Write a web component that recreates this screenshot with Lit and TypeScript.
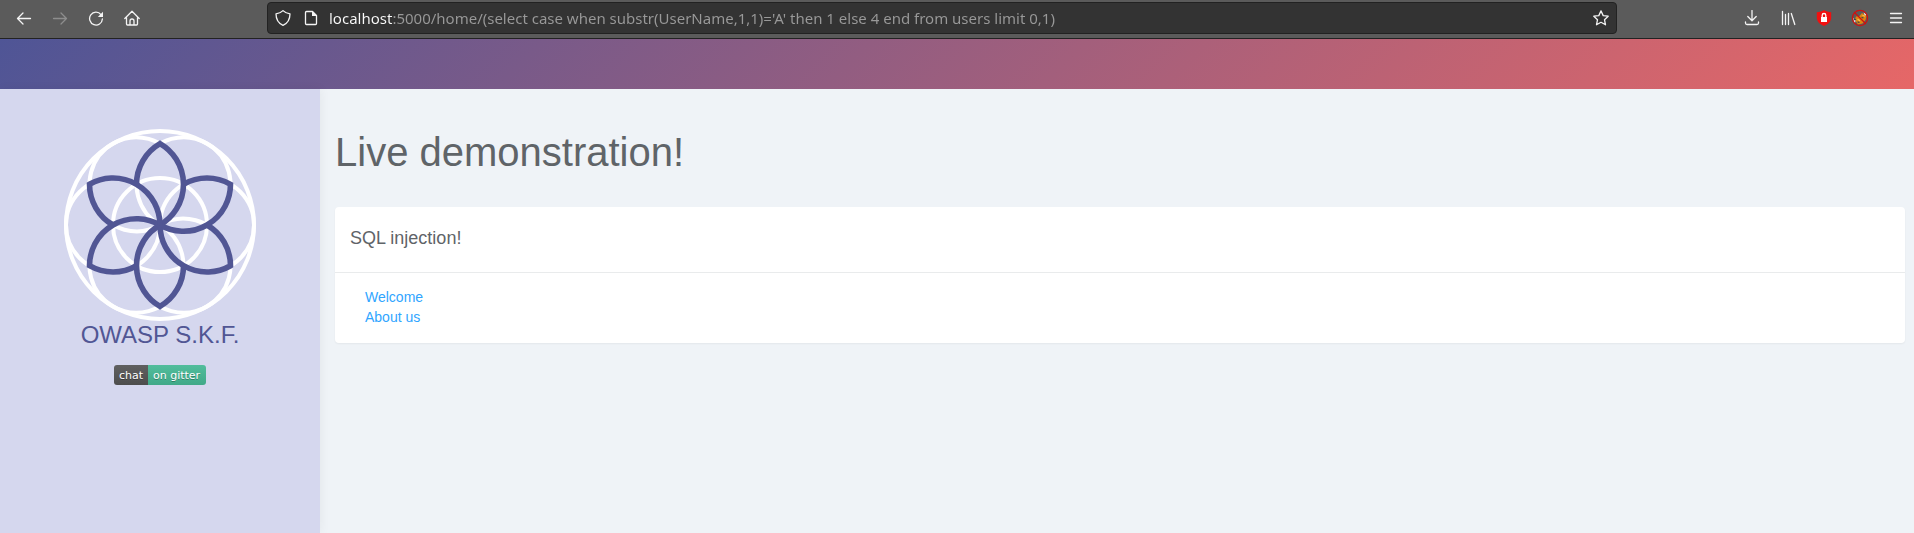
import { LitElement, html, css, svg } from "lit";
import { customElement, property } from "lit/decorators.js";

@customElement("flower-logo")
class FlowerLogo extends LitElement {
  static styles = css`
    :host { display: block; }
    .art { display: block; width: 192px; height: 192px; }
    .ring { fill: none; stroke: #fff; stroke-width: 4; }
    .petal { fill: none; stroke: #515694; stroke-width: 5.6; stroke-miterlimit: 8; }
  `;

  render() {
    const turns = [0, 60, 120, 180, 240, 300];
    return html`
      <svg class="art" viewBox="-96 -96 192 192" aria-hidden="true">
        <circle class="ring" r="94" />
        <circle class="ring" r="47" />
        ${turns.map((a) => svg`<circle class="ring" cx="47" r="47" transform="rotate(${a})" />`)}
        ${turns.map((a) => svg`<path class="petal" transform="rotate(${a})"
          d="M0 0A47 47 0 0 0 0-81.4A47 47 0 0 0-23.5-40.7" />`)}
      </svg>`;
  }
}

@customElement("browser-bar")
class BrowserBar extends LitElement {
  @property() address = "";

  static styles = css`
    :host { display: block; }
    .bar {
      display: grid;
      grid-template-columns: 267px minmax(0, 1350px) minmax(180px, 1fr);
      align-items: center;
      height: 36px;
      padding-bottom: 2px;
      background: #5b5b5b;
      border-bottom: 1px solid #222;
    }
    .group { display: flex; align-items: center; gap: 12px; }
    .nav { padding-left: 12px; }
    .tools { justify-content: flex-end; padding-right: 6px; }
    .icon {
      display: grid;
      place-items: center;
      width: 24px;
      height: 24px;
      padding: 0;
      border: 0;
      background: none;
      color: #f4f4f4;
    }
    .icon:disabled { color: #8d8d8d; }
    svg { display: block; width: 16px; height: 16px; fill: none; stroke: currentColor; stroke-width: 1.3; stroke-linecap: round; stroke-linejoin: round; }
    .solid { fill: currentColor; stroke: none; }
    .field {
      display: flex;
      align-items: center;
      gap: 4px;
      box-sizing: border-box;
      height: 32px;
      padding: 0 3px;
      border: 1px solid #222;
      border-radius: 4px;
      background: #333;
    }
    .address {
      flex: 1;
      min-width: 0;
      margin-left: 2px;
      padding: 0;
      border: 0;
      outline: 0;
      font: 15px/24px "Noto Sans", "Open Sans", sans-serif;
      color: transparent;
      background: linear-gradient(90deg, #fbfbfb 64px, #999 64px);
      background-clip: text;
      -webkit-background-clip: text;
    }
    .badge { width: 16px; height: 16px; overflow: visible; }
  `;

  render() {
    return html`
      <div class="bar">
        <nav class="group nav">
          <button class="icon" aria-label="Back"><svg viewBox="0 0 16 16"><path d="M14.5 8.500H1.500M7 3 1.500 8.500 7 14" /></svg></button>
          <button class="icon" aria-label="Forward" disabled><svg viewBox="0 0 16 16"><path d="M1.500 8.500H14.500M9 3 14.500 8.500 9 14" /></svg></button>
          <button class="icon" aria-label="Reload"><svg viewBox="0 0 16 16"><path d="M13 4.600A6.400 6.400 0 1 0 14.400 9" /><path class="solid" d="M15 1.800v5.200H9.800z" /></svg></button>
          <button class="icon" aria-label="Home"><svg viewBox="0 0 16 16"><path d="M.8 8.500 8 1.300l7.200 7.200M2.500 7.500V14a1 1 0 0 0 1 1h9a1 1 0 0 0 1-1V7.500M6 14.500V11a2 2 0 0 1 4 0v3.500" /></svg></button>
        </nav>
        <div class="field">
          <button class="icon" aria-label="Tracking protection"><svg viewBox="0 0 16 16"><path d="M8 .6C6.200 2.400 3.800 3.400 1 3.800 1 9 3.200 13.300 8 15.300c4.800-2 7-6.300 7-11.500C12.200 3.400 9.800 2.400 8 .6z" /></svg></button>
          <button class="icon" aria-label="Site information"><svg viewBox="0 0 16 16"><path d="M3.500 1.500H9.500L13.500 5.500v8a1 1 0 0 1-1 1h-9a1 1 0 0 1-1-1v-11a1 1 0 0 1 1-1z" /><path class="solid" d="M9 1v5h5z" /></svg></button>
          <input class="address" type="text" aria-label="Address" spellcheck="false" .value=${this.address} />
          <button class="icon" aria-label="Bookmark"><svg viewBox="0 0 16 16"><path d="m8 .9 2.200 4.700 5 .6-3.700 3.500 1 5.100L8 12.300l-4.500 2.500 1-5.100L.8 6.200l5-.6z" /></svg></button>
        </div>
        <div class="group tools">
          <button class="icon" aria-label="Downloads"><svg viewBox="0 0 16 16"><path d="M8 .5V10.500M3.800 6.500 8 10.700l4.200-4.200M1.500 12v1a1.500 1.500 0 0 0 1.500 1.500h10a1.500 1.500 0 0 0 1.500-1.500V12" /></svg></button>
          <button class="icon" aria-label="Library"><svg viewBox="0 0 16 16"><path d="M2.500 1.500v13M5.500 4.500v10M8.500 3.500v11M11.300 3.500 14.800 14.500" /></svg></button>
          <button class="icon" aria-label="Blocker"><svg class="badge" viewBox="0 0 16 16"><path fill="#f01010" stroke="none" d="M8 0C6 1.500 3.500 2 .8 2.200v5.300c0 4 3 7 7.200 8.500 4.200-1.500 7.200-4.500 7.200-8.500V2.200C12.500 2 10 1.500 8 0z" /><path fill="#fff" stroke="none" d="M5 7h6v5H5z" /><path stroke="#fff" d="M6.200 7V5.300a1.800 1.800 0 0 1 3.600 0V7" /></svg></button>
          <button class="icon" aria-label="Proxy"><svg class="badge" viewBox="0 0 16 16"><path fill="#eee" stroke="none" d="m.8 8 3 2-1 3.500zM11.500 2.500l3 2-1.500 2z" /><path fill="#dd8512" stroke="none" d="M4 6.500 7.500 6l2.500-3 2 1.500 2.500 1.500-1 4-3 3.500-4.500 1-2-3L3 9z" /><path stroke="#3d4650" d="M2.500 9.500h1M6 12l1 .3M10 7.500l1 .3" /><path stroke="#ffbf52" d="m6 9.500 1.500 1M11 5.500l1.500.5" /><path stroke="#d01010" d="M2.500 2.500 13.500 13.500" /><circle cx="8" cy="8" r="7.600" stroke="#d01010" /></svg></button>
          <button class="icon" aria-label="Menu"><svg viewBox="0 0 16 16"><path d="M2.500 3.500h11M2.500 8h11M2.500 12.500h11" /></svg></button>
        </div>
      </div>`;
  }
}

@customElement("app-root")
class AppRoot extends LitElement {
  static styles = css`
    :host {
      display: flex;
      flex-direction: column;
      min-height: 100vh;
      background: #eff3f7;
      font: 14px/20px "Liberation Sans", Arial, sans-serif;
      color: #5f6468;
    }
    .banner { height: 50px; background: linear-gradient(135deg, #4f5596, #e66767); }
    .page { display: flex; flex: 1; }
    .side {
      display: flex;
      flex-direction: column;
      align-items: center;
      box-sizing: border-box;
      width: 320px;
      padding-top: 40px;
      background: #d5d7ee;
      box-shadow: 1px 0 10px rgba(0, 0, 0, 0.05);
    }
    .brand { font-size: 24px; line-height: 28px; color: #515694; text-decoration: none; }
    .chat {
      display: flex;
      margin-top: 16px;
      border-radius: 3px;
      overflow: hidden;
      font: 11px/18px "DejaVu Sans", Verdana, sans-serif;
      color: #fff;
      text-decoration: none;
      text-shadow: 0 1px rgba(1, 1, 1, 0.3);
    }
    .key, .where { padding: 2px 5px 0; }
    .key { background: linear-gradient(#606060, #4d4d4d); }
    .where { padding-right: 6px; background: linear-gradient(#52bd9c, #41a988); }
    .main { flex: 1; min-width: 0; padding: 0 9px 0 15px; }
    .title { margin: 41px 0 33px; font-size: 40px; line-height: 44px; font-weight: 400; }
    .card { background: #fff; border-radius: 4px; box-shadow: 0 1px 2px rgba(0, 0, 0, 0.05); }
    .head {
      margin: 0;
      padding: 11px 15px 14px;
      border-bottom: 1px solid #e9ebec;
      font-size: 18px;
      line-height: 40px;
      font-weight: 400;
    }
    .links { margin: 0; padding: 14px 30px 16px; list-style: none; }
    .link { color: #30a5ff; text-decoration: none; }
  `;

  render() {
    const links = ["Welcome", "About us"];
    return html`
      <browser-bar address="localhost:5000/home/(select case when substr(UserName,1,1)='A' then 1 else 4 end from users limit 0,1)"></browser-bar>
      <header class="banner"></header>
      <div class="page">
        <aside class="side">
          <flower-logo></flower-logo>
          <a class="brand" href="#">OWASP S.K.F.</a>
          <a class="chat" href="#"><span class="key">chat</span><span class="where">on gitter</span></a>
        </aside>
        <main class="main">
          <h1 class="title">Live demonstration!</h1>
          <section class="card">
            <h2 class="head">SQL injection!</h2>
            <ul class="links">
              ${links.map((name) => html`<li><a class="link" href="#">${name}</a></li>`)}
            </ul>
          </section>
        </main>
      </div>`;
  }
}
